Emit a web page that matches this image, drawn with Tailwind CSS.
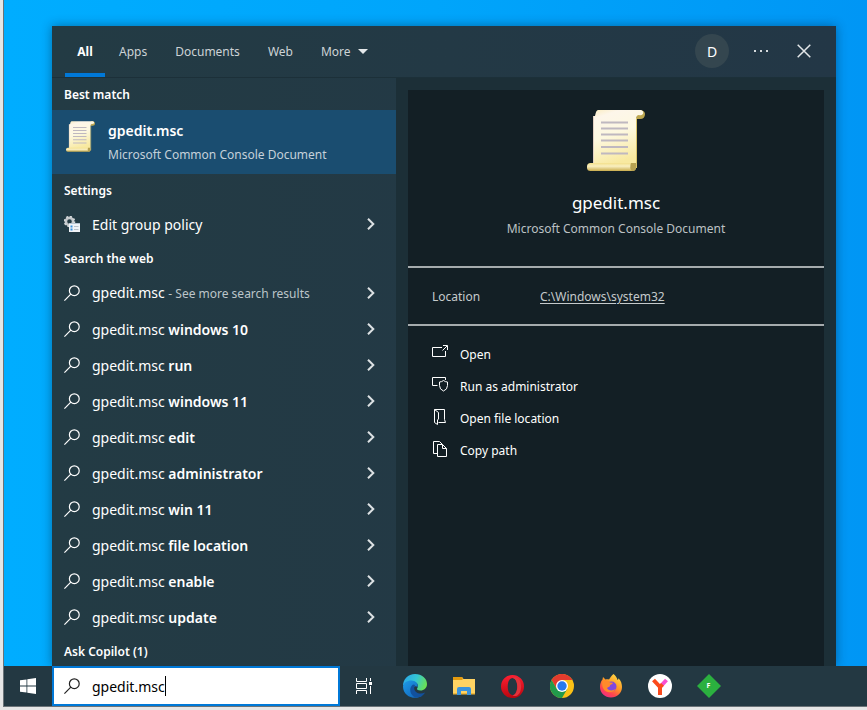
<!DOCTYPE html>
<html lang="en">
<head>
    <meta charset="UTF-8">
    <meta name="viewport" content="width=device-width, initial-scale=1.0">
    <title>Search</title>
    <script src="https://cdn.jsdelivr.net/npm/@tailwindcss/browser@4"></script>
</head>
<body class="bg-[#e6e6e6] font-['Segoe_UI','Noto_Sans','Open_Sans',sans-serif] text-[12px] text-white">

    <!-- Shared icons -->
    <svg class="absolute size-0" aria-hidden="true">
        <defs>
            <linearGradient id="paper" x1="0" y1="0" x2="0.3" y2="1">
                <stop offset="0" stop-color="#faecc0"/>
                <stop offset="0.15" stop-color="#fdf6ea"/>
                <stop offset="0.5" stop-color="#fdf8e0"/>
                <stop offset="1" stop-color="#f8e9a0"/>
            </linearGradient>
            <linearGradient id="roll" x1="0" y1="0" x2="0" y2="1">
                <stop offset="0" stop-color="#f3e08c"/>
                <stop offset="0.4" stop-color="#f9efc0"/>
                <stop offset="1" stop-color="#c9ac4c"/>
            </linearGradient>
        </defs>
        <symbol id="scroll" viewBox="0 0 58 61">
            <path d="M50 0h4q4 1 4 4q0 5-5 5h-4z" fill="#bda750"/>
            <path d="M11 0h43q3 1 2 4q-2 2-4 1q-3 0-3 5v46H6V6h2q1-6 3-6z" fill="url(#paper)"/>
            <path d="M6.500 6v48" stroke="#e2d0c2"/>
            <path d="M49.500 8v50" stroke="#d9c46c"/>
            <path d="M14 12.500h27M14 18.500h27M14 24.500h27M14 30.500h27M14 37h27M14 43.500h27" stroke="#bfb8c0" stroke-width="2"/>
            <rect x="0" y="53" width="49" height="8" rx="3.500" fill="url(#roll)"/>
            <path d="M45 53h4v5q-1 3-4 3q-3-3-1-8z" fill="#b7a252"/>
        </symbol>
        <symbol id="search" viewBox="0 0 16 16">
            <circle cx="10.300" cy="5.700" r="4.900" fill="none" stroke="currentColor" stroke-width="1.200"/>
            <path d="M6.800 9.200L.4 15.600" stroke="currentColor" stroke-width="1.200"/>
        </symbol>
        <symbol id="chevron" viewBox="0 0 8 12">
            <path d="M1 .8L6.300 6L1 11.200" fill="none" stroke="currentColor" stroke-width="2"/>
        </symbol>
    </svg>

    <div class="flex min-h-screen flex-col pb-[3px] pl-[3px]">
        <div class="flex flex-1 flex-col border-b border-l border-[#6b7378]">

            <!-- Desktop -->
            <main class="flex flex-1 bg-linear-to-r from-[#00adff] via-[#00a5fb] to-[#0096f5] pt-[26px] pr-[31px] pl-12">
                <div class="flex flex-1 flex-col bg-linear-to-r from-[#233b44] to-[#233746] shadow-[0_0_10px_rgba(0,30,60,0.45)]">

                    <header class="flex h-[52px] items-stretch border-b border-[#1c3039]">
                        <nav class="ml-[13px] flex items-stretch text-[#cdd3d6]">
                            <a href="#" class="flex w-10 items-center justify-center border-t-4 border-b-4 border-t-transparent border-b-[#0078d7] font-bold text-white">All</a>
                            <a href="#" class="flex items-center px-[14px]">Apps</a>
                            <a href="#" class="flex items-center px-[14px]">Documents</a>
                            <a href="#" class="flex items-center px-[14px]">Web</a>
                            <button class="flex items-center gap-[7px] px-[14px]">More
                                <svg class="h-[5px] w-[10px]" viewBox="0 0 10 5"><path d="M0 0h10L5 5z" fill="#e4e8ea"/></svg>
                            </button>
                        </nav>
                        <div class="ml-auto flex items-center pr-[25px] pb-px">
                            <button class="size-[34px] rounded-full bg-[#34464f] text-[14px]">D</button>
                            <button class="ml-[25px]" aria-label="Options">
                                <svg class="h-4 w-[15px]" viewBox="0 0 15 16" fill="#d5dadd"><path d="M0 7h2v2H0zM6 7h2v2H6zM12 7h2v2h-2z"/></svg>
                            </button>
                            <button class="ml-7" aria-label="Close">
                                <svg class="size-[14px]" viewBox="0 0 14 14"><path d="M.7.7l12.600 12.600M13.300.7L.7 13.300" stroke="#e3e7e9" stroke-width="1.500"/></svg>
                            </button>
                        </div>
                    </header>

                    <div class="flex flex-1">
                        <!-- Results -->
                        <section class="w-[344px] shrink-0">
                            <h2 class="flex h-8 items-center px-3 pt-[2px] font-semibold">Best match</h2>
                            <button class="flex h-16 w-full gap-[13px] bg-[#1a4d70] pt-[10px] pl-[14px] text-left">
                                <svg class="mt-px h-[31px] w-[29px]"><use href="#scroll"/></svg>
                                <span>
                                    <span class="block text-[14px] leading-[22px] font-semibold">gpedit.msc</span>
                                    <span class="block leading-[26px] text-[#c5d1da]">Microsoft Common Console Document</span>
                                </span>
                            </button>

                            <h2 class="flex h-8 items-center px-3 pt-[2px] font-semibold">Settings</h2>
                            <button class="flex h-9 w-full items-center pr-[21px] pl-3 text-[14px]">
                                <svg class="mr-3 size-4" viewBox="0 0 16 16">
                                    <circle cx="5.500" cy="5.500" r="3.600" fill="none" stroke="#c3c8cb" stroke-width="2.600"/>
                                    <circle cx="5.500" cy="5.500" r="5" fill="none" stroke="#d4d8da" stroke-width="1.600" stroke-dasharray="2 1.900"/>
                                    <rect x="5" y="7" width="11" height="9" fill="#f0f4f8"/>
                                    <path d="M5 7.500h11" stroke="#b8c6d2"/>
                                    <path d="M6.500 9.500h2v2h-2zM6.500 12.500h2v2h-2z" fill="#3a91dc"/>
                                    <path d="M10 10.500h4.500M10 13.500h4.500" stroke="#b9c2ca"/>
                                </svg>
                                Edit group policy
                                <svg class="ml-auto h-3 w-2 text-[#dce1e3]"><use href="#chevron"/></svg>
                            </button>

                            <h2 class="flex h-8 items-center px-3 pt-[2px] font-semibold">Search the web</h2>
                            <button class="flex h-[37px] w-full items-center pr-[21px] pl-3 text-[14px]">
                                <svg class="mr-3 size-4"><use href="#search"/></svg>
                                <span>gpedit.msc <span class="text-[12px] text-[#bcc5c9]">- See more search results</span></span>
                                <svg class="ml-auto h-3 w-2 text-[#dce1e3]"><use href="#chevron"/></svg>
                            </button>
                            <button class="flex h-9 w-full items-center pr-[21px] pl-3 text-[14px]">
                                <svg class="mr-3 size-4"><use href="#search"/></svg>
                                <span>gpedit.msc <b class="font-semibold">windows 10</b></span>
                                <svg class="ml-auto h-3 w-2 text-[#dce1e3]"><use href="#chevron"/></svg>
                            </button>
                            <button class="flex h-9 w-full items-center pr-[21px] pl-3 text-[14px]">
                                <svg class="mr-3 size-4"><use href="#search"/></svg>
                                <span>gpedit.msc <b class="font-semibold">run</b></span>
                                <svg class="ml-auto h-3 w-2 text-[#dce1e3]"><use href="#chevron"/></svg>
                            </button>
                            <button class="flex h-9 w-full items-center pr-[21px] pl-3 text-[14px]">
                                <svg class="mr-3 size-4"><use href="#search"/></svg>
                                <span>gpedit.msc <b class="font-semibold">windows 11</b></span>
                                <svg class="ml-auto h-3 w-2 text-[#dce1e3]"><use href="#chevron"/></svg>
                            </button>
                            <button class="flex h-9 w-full items-center pr-[21px] pl-3 text-[14px]">
                                <svg class="mr-3 size-4"><use href="#search"/></svg>
                                <span>gpedit.msc <b class="font-semibold">edit</b></span>
                                <svg class="ml-auto h-3 w-2 text-[#dce1e3]"><use href="#chevron"/></svg>
                            </button>
                            <button class="flex h-9 w-full items-center pr-[21px] pl-3 text-[14px]">
                                <svg class="mr-3 size-4"><use href="#search"/></svg>
                                <span>gpedit.msc <b class="font-semibold">administrator</b></span>
                                <svg class="ml-auto h-3 w-2 text-[#dce1e3]"><use href="#chevron"/></svg>
                            </button>
                            <button class="flex h-9 w-full items-center pr-[21px] pl-3 text-[14px]">
                                <svg class="mr-3 size-4"><use href="#search"/></svg>
                                <span>gpedit.msc <b class="font-semibold">win 11</b></span>
                                <svg class="ml-auto h-3 w-2 text-[#dce1e3]"><use href="#chevron"/></svg>
                            </button>
                            <button class="flex h-9 w-full items-center pr-[21px] pl-3 text-[14px]">
                                <svg class="mr-3 size-4"><use href="#search"/></svg>
                                <span>gpedit.msc <b class="font-semibold">file location</b></span>
                                <svg class="ml-auto h-3 w-2 text-[#dce1e3]"><use href="#chevron"/></svg>
                            </button>
                            <button class="flex h-9 w-full items-center pr-[21px] pl-3 text-[14px]">
                                <svg class="mr-3 size-4"><use href="#search"/></svg>
                                <span>gpedit.msc <b class="font-semibold">enable</b></span>
                                <svg class="ml-auto h-3 w-2 text-[#dce1e3]"><use href="#chevron"/></svg>
                            </button>
                            <button class="flex h-9 w-full items-center pr-[21px] pl-3 text-[14px]">
                                <svg class="mr-3 size-4"><use href="#search"/></svg>
                                <span>gpedit.msc <b class="font-semibold">update</b></span>
                                <svg class="ml-auto h-3 w-2 text-[#dce1e3]"><use href="#chevron"/></svg>
                            </button>
                            <h2 class="flex h-[31px] items-center px-3 pt-[2px] font-semibold">Ask Copilot (1)</h2>
                        </section>

                        <!-- Details -->
                        <section class="flex flex-1 flex-col bg-[#1c2f37] px-3 pt-3">
                            <div class="flex-1 bg-[#131f25]">
                                <div class="flex flex-col items-center border-b-2 border-[#a5abad] pt-5 pb-[27px]">
                                    <svg class="h-[61px] w-[58px]"><use href="#scroll"/></svg>
                                    <h1 class="mt-5 text-[17px] leading-6">gpedit.msc</h1>
                                    <p class="mt-1 leading-5 text-[#bcc1c4]">Microsoft Common Console Document</p>
                                </div>
                                <div class="flex h-[58px] items-center border-b-2 border-[#a5abad] px-6 pt-[2px] text-[#c5cacc]">
                                    <span class="w-[108px]">Location</span>
                                    <a href="#" class="underline underline-offset-2">C:\Windows\system32</a>
                                </div>
                                <ul class="pt-[13px] pl-6">
                                    <li><button class="flex h-8 items-center gap-3">
                                        <svg class="mb-1 size-4" viewBox="0 0 16 16" fill="none" stroke="#fff"><path d="M10 2.500H.5v9h13V6M10.500 5.500L15 1M11 .5h4.500V5"/></svg>
                                        Open
                                    </button></li>
                                    <li><button class="flex h-8 items-center gap-3">
                                        <svg class="mb-1 size-4" viewBox="0 0 16 16" fill="none" stroke="#fff"><path d="M5.500 8.500h-5v-8h13V3M11.500 3.500Q9.500 5 7.500 5v3.500q0 4 4 5.500q4-1.500 4-5.500V5q-2 0-4-1.500z"/></svg>
                                        Run as administrator
                                    </button></li>
                                    <li><button class="flex h-8 items-center gap-3">
                                        <svg class="mb-1 size-4" viewBox="0 0 16 16" fill="none" stroke="#fff"><path d="M2.500 .5h10v10l1 3H6.500M2.500 .5v13l3 2V11l1-1V3.500z"/></svg>
                                        Open file location
                                    </button></li>
                                    <li><button class="flex h-8 items-center gap-3">
                                        <svg class="mb-1 size-4" viewBox="0 0 16 16" fill="none" stroke="#fff"><path d="M5 12.500H1.500V.5h6l3 3M5.500 3.500h5l4 4v8h-9zM10.500 3.500v4h4"/></svg>
                                        Copy path
                                    </button></li>
                                </ul>
                            </div>
                        </section>
                    </div>
                </div>
            </main>

            <!-- Taskbar -->
            <footer class="flex h-10 bg-[#233842]">
                <button class="flex w-12 items-center justify-center" aria-label="Start">
                    <svg class="size-4" viewBox="0 0 16 16" fill="#fff"><path d="M0 2.300L6.500 1.400V7.500H0zM7.300 1.300L16 0V7.500H7.300zM0 8.400h6.500v6.200L0 13.700zM7.300 8.400H16V16L7.300 14.700z"/></svg>
                </button>
                <label class="flex w-[288px] items-center gap-3 border-2 border-[#0078d7] bg-white pl-[10px] text-[#222]">
                    <svg class="size-4 shrink-0"><use href="#search"/></svg>
                    <span class="flex items-center">
                        <input type="text" value="gpedit.msc" aria-label="Search" class="field-sizing-content text-[14px] text-black outline-none">
                        <span class="h-5 w-px bg-black"></span>
                    </span>
                </label>
                <button class="flex w-12 items-center justify-center" aria-label="Task view">
                    <svg class="size-4" viewBox="0 0 16 16" fill="none" stroke="#fff"><path d="M.5 0v3.500h10V0M.5 5.500h10v5H.5zM.5 16v-3.500h10V16M14.500 0v3M14.500 8v8"/><path d="M13 4h3v3h-3z" fill="#fff" stroke="none"/></svg>
                </button>
                <button class="ml-[2px] flex w-[49px] items-center justify-center" aria-label="Edge">
                    <svg class="size-6" viewBox="0 0 24 24">
                        <defs>
                            <linearGradient id="edgeTop" x1="0" y1="0.3" x2="1" y2="0.6"><stop offset="0" stop-color="#2aa7e8"/><stop offset="0.5" stop-color="#34c6d4"/><stop offset="1" stop-color="#6be04f"/></linearGradient>
                            <linearGradient id="edgeLow" x1="0" y1="0" x2="1" y2="1"><stop offset="0" stop-color="#1e9be8"/><stop offset="1" stop-color="#0f5db4"/></linearGradient>
                        </defs>
                        <path d="M0 12C0 5 5 0 12 0s12 4.500 12 10c0 4-3 6.500-6.500 6.500c-3 0-4-1.200-3.300-2.300c2-2.600 0-6.700-5.200-6.700C5 7.500 1.500 9 0 12z" fill="url(#edgeTop)"/>
                        <path d="M0 12.500C.5 8.500 4.500 6.300 8.500 6.500c4.500.2 7 3.500 6 6.500c-1.500-1.500-5.500-.5-5.500 3.500c0 5 6 7 10.500 5C12 27 0 22.500 0 12.500z" fill="url(#edgeLow)"/>
                        <path d="M10 10.500c-4 3-3.500 9 .5 12c4 2 9 .5 11.700-4c-5 2.500-11 .5-11-4.500q0-2 1-3z" fill="#12519e"/>
                    </svg>
                </button>
                <button class="flex w-[49px] items-center justify-center" aria-label="File Explorer">
                    <svg class="h-[18px] w-[22px]" viewBox="0 0 22 18">
                        <path d="M0 0h9l1.500 2H22v15H0z" fill="#ffd363"/>
                        <path d="M0 0h9l1 2-1 1H0z" fill="#e49b0f"/>
                        <path d="M0 16h22v1.500H0z" fill="#eeb639"/>
                        <path d="M4 18v-6q0-2 2-2h10q2 0 2 2v6h-4v-4H8v4z" fill="#3a93dd"/>
                    </svg>
                </button>
                <button class="flex w-[49px] items-center justify-center" aria-label="Opera">
                    <svg class="size-[23px]" viewBox="0 0 24 24">
                        <defs><linearGradient id="opera" x1="0" y1="0" x2="0" y2="1"><stop offset="0" stop-color="#ff1f32"/><stop offset="1" stop-color="#b8060f"/></linearGradient></defs>
                        <path fill-rule="evenodd" d="M12 0a12 12 0 1 0 0 24a12 12 0 1 0 0-24zM12 3c3 0 5 4 5 9s-2 9-5 9s-5-4-5-9s2-9 5-9z" fill="url(#opera)"/>
                        <path d="M12 3c4-3 9 1 9 9s-5 12-9 9c3 0 5-4 5-9s-2-9-5-9z" fill="#e0343c"/>
                    </svg>
                </button>
                <button class="flex w-[49px] items-center justify-center" aria-label="Chrome">
                    <svg class="size-6" viewBox="0 0 24 24">
                        <circle cx="12" cy="12" r="12" fill="#fbc116"/>
                        <path d="M1.600 6A12 12 0 0 1 22.400 6H12L6.800 15z" fill="#e33b2e"/>
                        <path d="M1.600 6A12 12 0 0 0 12 24l5.200-9L12 12L6.800 15z" fill="#229a4b"/>
                        <circle cx="12" cy="12" r="6" fill="#fff"/>
                        <circle cx="12" cy="12" r="4.700" fill="#2879ee"/>
                    </svg>
                </button>
                <button class="flex w-[49px] items-center justify-center" aria-label="Firefox">
                    <svg class="size-6" viewBox="0 0 24 24">
                        <defs><linearGradient id="fox" x1="0.8" y1="0" x2="0.2" y2="1"><stop offset="0" stop-color="#ffe046"/><stop offset="0.45" stop-color="#ff9526"/><stop offset="0.75" stop-color="#ff4450"/><stop offset="1" stop-color="#ee2a8c"/></linearGradient></defs>
                        <path d="M14.500 0c2 1.500 3.500 3.500 4 6c.7-.3 1-.9 1-1.800c2.500 2.500 3.500 5.500 3.500 8.800c0 6-5 10.500-11 10.500S1 19 1 13c0-3 .8-5.500 2.500-7.500L4 3l2.500 2.500c1-.3 2.500-.3 3.500 0C11 4 12.500 1.500 14.500 0z" fill="url(#fox)"/>
                        <circle cx="12.500" cy="12.500" r="5" fill="#8048df"/>
                        <path d="M3.500 7c3-1.500 6-.5 7.500 1.500l3 .3c0 1.200-2.500 1.700-3 2.500c.3 2-2.800 1.700-2.800 3.200c1.500 2.500 6 2.500 7.800.5c-1 4-9.500 5-12-1C3 11.500 3 9 3.500 7z" fill="#ff8a2b"/>
                    </svg>
                </button>
                <button class="flex w-[49px] items-center justify-center" aria-label="Yandex">
                    <svg class="size-6" viewBox="0 0 24 24" fill="none" stroke-width="4">
                        <circle cx="12" cy="12" r="12" fill="#fff"/>
                        <path d="M12 13L18.500 6" stroke="#f94fd0"/>
                        <path d="M5.500 6L12 13v8M12 13l2.500-2.700" stroke="#fb4a1c"/>
                    </svg>
                </button>
                <button class="flex w-[49px] items-center justify-center" aria-label="F">
                    <span class="relative flex size-6 items-center justify-center">
                        <svg class="absolute inset-0 size-6" viewBox="0 0 24 24"><path d="M12 0l12 12l-12 12L0 12z" fill="#2bb03f"/></svg>
                        <span class="relative text-[7px] font-bold">F</span>
                    </span>
                </button>
            </footer>
        </div>
    </div>
</body>
</html>
